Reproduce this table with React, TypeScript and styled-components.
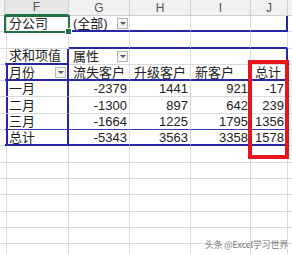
import React from 'react'
import styled, { createGlobalStyle } from 'styled-components'

type Edge = 'grid' | 'blue' | 'thin' | 'none'

const GlobalStyle = createGlobalStyle`
  html, body {
    margin: 0;
    padding: 0;
    background: #fff;
    overflow: hidden;
  }
`

const edge = (e: Edge = 'grid') => {
  if (e === 'blue') return '2px solid #2626a8'
  if (e === 'thin') return '1px solid #3a3ab0'
  if (e === 'none') return 'none'
  return '1px solid #dadada'
}

const Page = styled.div`
  position: relative;
  width: 292px;
  height: 254px;
  overflow: hidden;
  font-family: 'Liberation Sans', 'Noto Sans CJK SC', sans-serif;
  color: #222;
`

const Sheet = styled.div`
  display: grid;
  grid-template-columns: 5px 64px 61px 61px 60px 37px 1fr;
  grid-template-rows: 16px;
  grid-auto-rows: 16.3px;
`

const HeadCell = styled.div<{ $active?: boolean }>`
  box-sizing: border-box;
  display: flex;
  align-items: center;
  justify-content: center;
  background: ${p => (p.$active ? '#e6e6e6' : '#f1f1f1')};
  border-right: 1px solid #d2d2d2;
  border-bottom: ${p => (p.$active ? '2px solid #217346' : '1px solid #cfcfcf')};
  font-size: 12px;
  color: #555;
`

const Cell = styled.div<{
  $r?: Edge
  $b?: Edge
  $align?: 'left' | 'right'
  $sel?: boolean
  $drop?: boolean
}>`
  box-sizing: border-box;
  position: relative;
  display: flex;
  align-items: center;
  justify-content: ${p => (p.$align === 'right' ? 'flex-end' : 'flex-start')};
  padding: 0 ${p => (p.$drop ? 1 : 2)}px 0 4px;
  border-right: ${p => edge(p.$r)};
  border-bottom: ${p => edge(p.$b)};
  font-size: 13px;
  line-height: 1;
  white-space: nowrap;
  overflow: ${p => (p.$sel ? 'visible' : 'hidden')};
  z-index: ${p => (p.$sel ? 2 : 0)};
  outline: ${p => (p.$sel ? '2px solid #217346' : 'none')};
  outline-offset: -1px;

  &::after {
    content: '';
    display: ${p => (p.$sel ? 'block' : 'none')};
    position: absolute;
    right: -4px;
    bottom: -4px;
    width: 5px;
    height: 5px;
    background: #217346;
    border: 1px solid #fff;
  }
`

const Drop = styled.span`
  box-sizing: border-box;
  width: 11px;
  height: 11px;
  margin-left: auto;
  display: flex;
  align-items: center;
  justify-content: center;
  border: 1px solid #b8b8b8;
  background: #f3f3f3;

  &::after {
    content: '';
    border-left: 3px solid transparent;
    border-right: 3px solid transparent;
    border-top: 3px solid #555;
  }
`

const RedBox = styled.div`
  position: absolute;
  left: 248px;
  top: 60px;
  width: 41px;
  height: 99px;
  box-sizing: border-box;
  border: 4px solid #e8141c;
`

const Watermark = styled.div`
  position: absolute;
  right: 4px;
  top: 238px;
  font-family: 'Noto Sans CJK SC', sans-serif;
  font-size: 9px;
  color: #777;
  text-shadow: 0 0 2px #fff;
  letter-spacing: -0.2px;
`

type Spec = {
  text?: string
  align?: 'left' | 'right'
  r?: Edge
  b?: Edge
  drop?: boolean
  sel?: boolean
}

const cols = ['', 'F', 'G', 'H', 'I', 'J', '']

const num = (text: string, extra: Partial<Spec> = {}): Spec => ({ text, align: 'right', ...extra })

const dataRows: [string, string, string, string, string][] = [
  ['一月', '-2379', '1441', '921', '-17'],
  ['二月', '-1300', '897', '642', '239'],
  ['三月', '-1664', '1225', '1795', '1356'],
  ['总计', '-5343', '3563', '3358', '1578'],
]

const rows: Spec[][] = [
  [
    {},
    { text: '分公司', sel: true },
    { text: '(全部)', drop: true, b: 'blue' },
    { b: 'blue' },
    { b: 'blue' },
    { b: 'blue', r: 'blue' },
    {},
  ],
  [{}, {}, { b: 'blue' }, { b: 'blue' }, { b: 'blue' }, { b: 'blue' }, {}],
  [
    {},
    { text: '求和项值', r: 'blue', b: 'blue' },
    { text: '属性', drop: true },
    {},
    {},
    { r: 'blue' },
    {},
  ],
  [
    { r: 'blue' },
    { text: '月份', drop: true, r: 'blue', b: 'blue' },
    { text: '流失客户', b: 'blue' },
    { text: '升级客户', b: 'blue' },
    { text: '新客户', b: 'blue' },
    { text: '总计', b: 'blue', r: 'blue' },
    {},
  ],
  ...dataRows.map((row, i) => {
    const last = i === dataRows.length - 1
    const b: Edge = last ? 'blue' : i === dataRows.length - 2 ? 'thin' : 'grid'
    return [
      { r: 'blue' as Edge },
      { text: row[0], r: 'blue' as Edge, b },
      num(row[1], { b }),
      num(row[2], { b }),
      num(row[3], { b }),
      num(row[4], { b, r: 'blue' }),
      {},
    ]
  }),
  ...Array.from({ length: 7 }, () => cols.map(() => ({} as Spec))),
]

const App: React.FC = () => {
  return (
    <Page>
      <GlobalStyle />
      <Sheet>
        {cols.map((c, i) => (
          <HeadCell key={'h' + i} $active={c === 'F'}>
            {c}
          </HeadCell>
        ))}
        {rows.map((row, ri) =>
          row.map((cell, ci) => (
            <Cell
              key={ri + '-' + ci}
              $r={cell.r}
              $b={cell.b}
              $align={cell.align}
              $sel={cell.sel}
              $drop={cell.drop}
            >
              {cell.text}
              {cell.drop && <Drop />}
            </Cell>
          ))
        )}
      </Sheet>
      <RedBox />
      <Watermark>头条 @Excel学习世界</Watermark>
    </Page>
  )
}

export default App
